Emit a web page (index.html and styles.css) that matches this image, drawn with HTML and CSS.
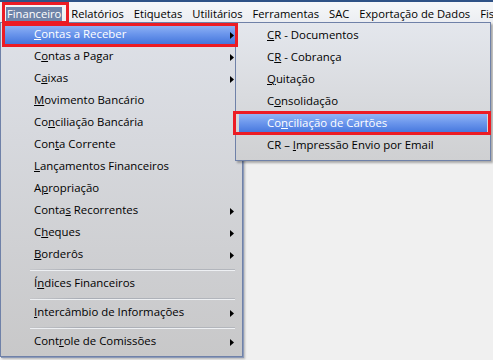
FILE: index.html
```html
<!DOCTYPE html>
<html lang="pt-BR">
<head>
<meta charset="utf-8">
<title>Financeiro</title>
<link rel="stylesheet" href="styles.css">
</head>
<body>
<div class="screen">
  <nav class="menubar">
    <span class="mb-item active">Financeiro</span>
    <span class="mb-item">Relatórios</span>
    <span class="mb-item">Etiquetas</span>
    <span class="mb-item">Utilitários</span>
    <span class="mb-item">Ferramentas</span>
    <span class="mb-item">SAC</span>
    <span class="mb-item">Exportação de Dados</span>
    <span class="mb-item">Fis</span>
  </nav>

  <ul class="menu main-menu">
    <li class="item hl"><span class="label"><u>C</u>ontas a Receber</span><svg class="arrow" width="4" height="7" viewBox="0 0 4 7"><polygon points="0,0 4,3.5 0,7"/></svg></li>
    <li class="item"><span class="label">C<u>o</u>ntas a Pagar</span><svg class="arrow" width="4" height="7" viewBox="0 0 4 7"><polygon points="0,0 4,3.5 0,7"/></svg></li>
    <li class="item"><span class="label">C<u>a</u>ixas</span><svg class="arrow" width="4" height="7" viewBox="0 0 4 7"><polygon points="0,0 4,3.5 0,7"/></svg></li>
    <li class="item"><span class="label"><u>M</u>ovimento Bancário</span></li>
    <li class="item"><span class="label">Co<u>n</u>ciliação Bancária</span></li>
    <li class="item"><span class="label">Con<u>t</u>a Corrente</span></li>
    <li class="item"><span class="label"><u>L</u>ançamentos Financeiros</span></li>
    <li class="item"><span class="label">A<u>p</u>ropriação</span></li>
    <li class="item"><span class="label">Conta<u>s</u> Recorrentes</span><svg class="arrow" width="4" height="7" viewBox="0 0 4 7"><polygon points="0,0 4,3.5 0,7"/></svg></li>
    <li class="item"><span class="label">C<u>h</u>eques</span><svg class="arrow" width="4" height="7" viewBox="0 0 4 7"><polygon points="0,0 4,3.5 0,7"/></svg></li>
    <li class="item"><span class="label"><u>B</u>orderôs</span><svg class="arrow" width="4" height="7" viewBox="0 0 4 7"><polygon points="0,0 4,3.5 0,7"/></svg></li>
    <li class="sep"></li>
    <li class="item"><span class="label">Í<u>n</u>dices Financeiros</span></li>
    <li class="sep"></li>
    <li class="item"><span class="label"><u>I</u>ntercâmbio de Informações</span><svg class="arrow" width="4" height="7" viewBox="0 0 4 7"><polygon points="0,0 4,3.5 0,7"/></svg></li>
    <li class="sep"></li>
    <li class="item"><span class="label">Cont<u>r</u>ole de Comissões</span><svg class="arrow" width="4" height="7" viewBox="0 0 4 7"><polygon points="0,0 4,3.5 0,7"/></svg></li>
  </ul>

  <ul class="menu sub-menu">
    <li class="item"><span class="label"><u>C</u>R - Documentos</span></li>
    <li class="item"><span class="label">C<u>R</u> - Cobrança</span></li>
    <li class="item"><span class="label"><u>Q</u>uitação</span></li>
    <li class="item"><span class="label">C<u>o</u>nsolidação</span></li>
    <li class="item hl"><span class="label">Co<u>n</u>ciliação de Cartões</span></li>
    <li class="item"><span class="label">CR – <u>I</u>mpressão Envio por Email</span></li>
  </ul>

  <div class="mark mark-top"></div>
  <div class="mark mark-main"></div>
  <div class="mark mark-sub"></div>
</div>
</body>
</html>
```

FILE: styles.css
```css
* {
  box-sizing: border-box;
  margin: 0;
  padding: 0;
}

html,
body {
  width: 493px;
  height: 360px;
  overflow: hidden;
}

body {
  font-family: "Open Sans", "Noto Sans", sans-serif;
  font-size: 11.2px;
  color: #000;
  background: #f0f0f0;
}

.screen {
  position: relative;
  width: 493px;
  height: 360px;
}

/* ---------- menu bar ---------- */
.menubar {
  display: flex;
  gap: 8px;
  height: 22px;
  padding: 5px 0 0 6px;
  border-top: 2px solid #2f5286;
  background: linear-gradient(#f6f7f9, #eceef2);
  white-space: nowrap;
  overflow: hidden;
}

.mb-item {
  height: 14px;
  line-height: 14px;
  padding: 0 1px;
}

.mb-item.active {
  background: #6f84a8;
  color: #fff;
}

/* ---------- dropdown menus ---------- */
.menu {
  position: absolute;
  list-style: none;
  border: 1px solid #6f81a8;
  font-size: 11.4px;
}

.main-menu {
  left: 0;
  top: 22px;
  width: 243px;
  padding: 1px 3px 3px 3px;
  background: linear-gradient(#dee1e8, #c8c8c9);
  box-shadow: 1px 1px 0 #8c9ab8, 2px 2px 2px rgba(0, 0, 0, 0.25);
}

.sub-menu {
  left: 235px;
  top: 22px;
  width: 256px;
  padding: 2px 3px 3px 3px;
  background: linear-gradient(#e4e7ed, #cfd0d2);
  box-shadow: 2px 2px 2px rgba(0, 0, 0, 0.3);
  z-index: 2;
}

.item {
  display: flex;
  align-items: center;
  justify-content: space-between;
  height: 22px;
  white-space: nowrap;
}

.label {
  line-height: 14px;
  margin-bottom: 2px;
}

.main-menu .item {
  padding: 0 5px 0 30px;
}

.sub-menu .item {
  padding: 0 5px 0 28px;
}

.label u {
  text-decoration-thickness: 1px;
  text-underline-offset: 1px;
}

.item.hl {
  color: #fff;
  background: linear-gradient(#96b8f6, #6b96ec 45%, #3d6fd9);
}

.arrow {
  display: block;
  fill: #000;
}

.sep {
  position: relative;
  height: 7px;
}

.sep::before {
  content: "";
  position: absolute;
  left: 26px;
  right: 4px;
  top: 3px;
  height: 1px;
  background: linear-gradient(to right, rgba(170, 174, 182, 0.2), #a9adb5 25%, #b4b7bd);
  box-shadow: 0 1px 0 #eef0f3;
}

/* ---------- red annotation boxes ---------- */
.mark {
  position: absolute;
  border: 3px solid #ec1c24;
  z-index: 5;
}

.mark-top {
  left: 2px;
  top: 2px;
  width: 67px;
  height: 22px;
}

.mark-main {
  left: 2px;
  top: 23px;
  width: 236px;
  height: 24px;
}

.mark-sub {
  left: 233px;
  top: 111px;
  width: 258px;
  height: 24px;
}
```
